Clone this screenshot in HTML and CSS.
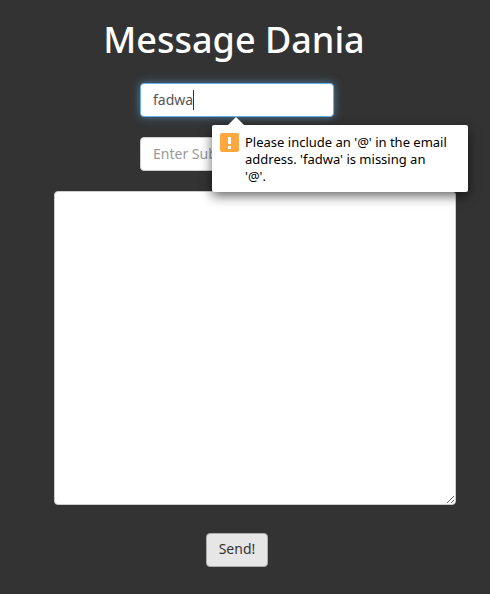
FILE: index.html
```html
<!DOCTYPE html>
<html lang="en">
<head>
<meta charset="utf-8">
<meta name="viewport" content="width=device-width, initial-scale=1">
<title>Message Dania</title>
<link rel="stylesheet" href="styles.css">
</head>
<body>
<main class="page">
  <h1 class="title">Message Dania</h1>
  <form class="form" novalidate>
    <div class="field">
      <input class="control control-active" type="email" name="email" value="fadwa" aria-label="Email" aria-describedby="email-hint">
      <span class="caret"></span>
      <div class="bubble" id="email-hint" role="alert">
        <svg class="bubble-icon" viewBox="0 0 19 19" aria-hidden="true">
          <rect width="19" height="19" rx="2" fill="#ffa73f"/>
          <path d="M8 4h3v7H8zM8 13h3v3H8z" fill="#fff"/>
        </svg>
        <p class="bubble-text">Please include an '@' in the email address. 'fadwa' is missing an<br>'@'.</p>
      </div>
    </div>
    <div class="field">
      <input class="control" type="text" name="subject" placeholder="Enter Subject" aria-label="Subject">
    </div>
    <textarea class="control message" name="message" aria-label="Message"></textarea>
    <button class="send" type="submit">Send!</button>
  </form>
</main>
</body>
</html>
```
FILE: styles.css
```css
* {
  box-sizing: border-box;
}

body {
  margin: 0;
  background: #333;
  color: #fff;
  font-family: "Noto Sans", sans-serif;
  font-size: 14px;
  line-height: 20px;
}

.page {
  padding: 16px 16px 24px 0;
}

.title {
  margin: 0 0 20px;
  padding-right: 6px;
  font-size: 36px;
  font-weight: 500;
  line-height: 47px;
  text-align: center;
}

.form {
  display: flex;
  flex-direction: column;
  align-items: center;
  gap: 20px;
}

.field {
  position: relative;
  width: 194px;
}

.control {
  display: block;
  width: 100%;
  height: 34px;
  margin: 0;
  padding: 5px 12px 7px;
  border: 1px solid #ccc;
  border-radius: 4px;
  background: #fff;
  color: #555;
  font: inherit;
  outline: none;
}

.control::placeholder {
  color: #999;
  opacity: 1;
}

.control-active {
  border-color: #66afe9;
  box-shadow: 0 0 8px rgba(102, 175, 233, 0.6);
}

.caret {
  position: absolute;
  top: 7px;
  left: 53px;
  width: 1px;
  height: 20px;
  background: #333;
}

.bubble {
  position: absolute;
  z-index: 1;
  top: 42px;
  left: 72px;
  display: flex;
  gap: 6px;
  width: 256px;
  padding: 8px 8px 7px;
  border-radius: 2px;
  background: #fff;
  color: #000;
  box-shadow: 0 4px 12px rgba(0, 0, 0, 0.6);
}

.bubble::before {
  content: "";
  position: absolute;
  top: -8px;
  left: 16px;
  border: 8px solid transparent;
  border-top: 0;
  border-bottom-color: #fff;
}

.bubble-icon {
  flex: none;
  width: 19px;
  height: 19px;
}

.bubble-text {
  margin: 0;
  padding-top: 1px;
  font-size: 13px;
  line-height: 17px;
}

.message {
  align-self: flex-end;
  width: calc(100% - 72px);
  height: 314px;
  margin-right: 18px;
  resize: both;
}

.send {
  height: 34px;
  margin: 8px 0 0;
  padding: 5px 12px 7px;
  border: 1px solid #adadad;
  border-radius: 4px;
  background: #e6e6e6;
  color: #333;
  font: inherit;
  cursor: pointer;
}
```
